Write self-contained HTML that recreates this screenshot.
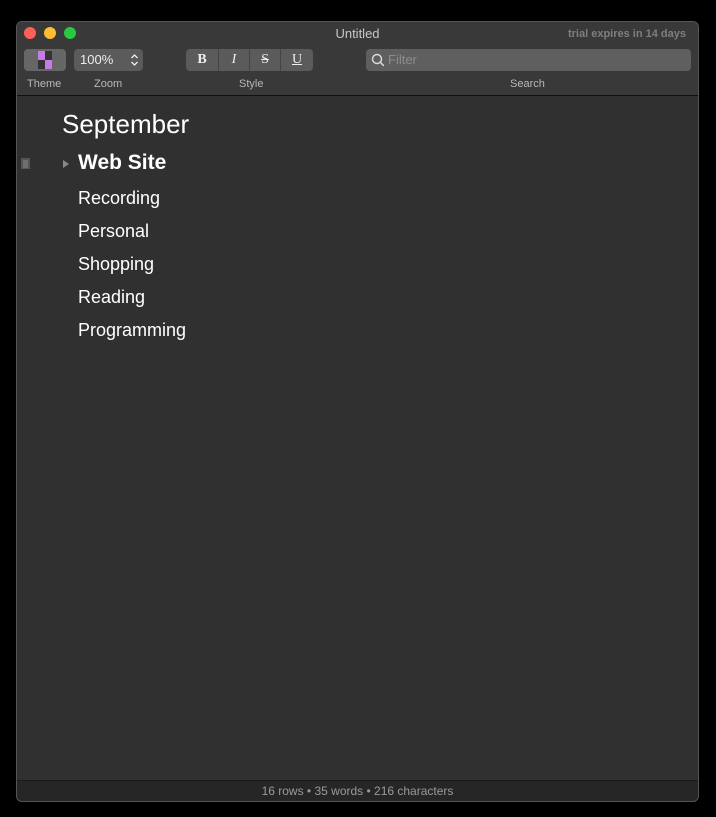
<!DOCTYPE html>
<html><head><style>
*{margin:0;padding:0;box-sizing:border-box}
body{width:716px;height:817px;background:#000;position:relative;font-family:"Liberation Sans",sans-serif;overflow:hidden}
.win{position:absolute;left:16px;top:21px;width:683px;height:781px;background:#303030;border-radius:6px;border:1px solid #555;overflow:hidden}
.tb{position:absolute;left:0;top:0;width:100%;height:74px;background:#393939;border-bottom:1px solid #111}
.dot{position:absolute;top:5px;width:12px;height:12px;border-radius:50%}
.t{position:absolute;color:#c8c8c8;font-size:13px;top:4px;left:0;width:100%;text-align:center}
.trial{position:absolute;right:12px;top:6px;font-size:11px;font-weight:bold;color:#7e7e7e}
.btn{position:absolute;top:27px;height:22px;background:#5b5b5b;border-radius:4px}
.lbl{position:absolute;top:56px;font-size:11px;color:#b8b8b8}
.row{position:absolute;color:#fff;font-size:18px}
.foot{position:absolute;left:0;bottom:0;width:100%;height:21px;background:#262626;border-top:1px solid #1a1a1a;color:#9a9a9a;font-size:12px;text-align:center;line-height:20px}
</style></head><body>
<div class="win">
<div class="tb">
<div class="dot" style="left:7px;background:#fe5f57"></div>
<div class="dot" style="left:27px;background:#febc2e"></div>
<div class="dot" style="left:47px;background:#28c840"></div>
<div class="t">Untitled</div>
<div class="trial">trial expires in 14 days</div>
<div class="btn" style="left:7px;width:42px;background:#666">
<svg width="42" height="22"><path d="M14 2h10l4 4v14h-14z" fill="#c67be6"/><rect x="14" y="11" width="7" height="9" fill="#333"/><rect x="21" y="2" width="7" height="9" fill="#333"/><path d="M21 2h3l4 4v5h-7z" fill="#c67be6" opacity="0"/></svg></div>
<div class="btn" style="left:57px;width:69px;color:#eee;font-size:13px;line-height:22px;padding-left:6px">100%<svg style="position:absolute;right:4px;top:4px" width="9" height="14"><path d="M1.5 5l3-3 3 3M1.5 9l3 3 3-3" fill="none" stroke="#eee" stroke-width="1.3"/></svg></div>
<div class="btn" style="left:169px;width:127px;font-family:'Liberation Serif',serif;color:#eee;font-size:14px;line-height:22px">
<span style="position:absolute;left:0;width:33px;text-align:center;font-weight:bold;border-right:1px solid #444">B</span>
<span style="position:absolute;left:33px;width:31px;text-align:center;font-style:italic;border-right:1px solid #444">I</span>
<span style="position:absolute;left:64px;width:31px;text-align:center;text-decoration:line-through;border-right:1px solid #444">S</span>
<span style="position:absolute;left:95px;width:32px;text-align:center;text-decoration:underline">U</span></div>
<div class="btn" style="left:349px;width:325px;background:#5f5f5f;color:#8e8e8e;font-size:13px;line-height:22px;padding-left:22px">
<svg style="position:absolute;left:5px;top:4px" width="14" height="14"><circle cx="6" cy="6" r="4.5" fill="none" stroke="#ddd" stroke-width="1.4"/><path d="M9.3 9.3l3.5 3.5" stroke="#ddd" stroke-width="1.5"/></svg>Filter</div>
<div class="lbl" style="left:10px">Theme</div>
<div class="lbl" style="left:77px">Zoom</div>
<div class="lbl" style="left:222px">Style</div>
<div class="lbl" style="left:493px">Search</div>
</div>
<div class="row" style="left:45px;top:87px;font-size:26px">September</div>
<svg style="position:absolute;left:4px;top:136px" width="10" height="12"><rect x="0" y="0" width="9" height="11" fill="#555"/><path d="M2 3h5M2 5h5M2 7h5M2 9h5" stroke="#888"/></svg>
<svg style="position:absolute;left:45px;top:137px" width="8" height="10"><path d="M1 1l6 4-6 4z" fill="#888"/></svg>
<div class="row" style="left:61px;top:129px;font-size:21px;font-weight:bold">Web Site</div>
<div class="row" style="left:61px;top:166px">Recording</div>
<div class="row" style="left:61px;top:199px">Personal</div>
<div class="row" style="left:61px;top:232px">Shopping</div>
<div class="row" style="left:61px;top:265px">Reading</div>
<div class="row" style="left:61px;top:298px">Programming</div>
<div class="foot">16 rows • 35 words • 216 characters</div>
</div>
</body></html>
